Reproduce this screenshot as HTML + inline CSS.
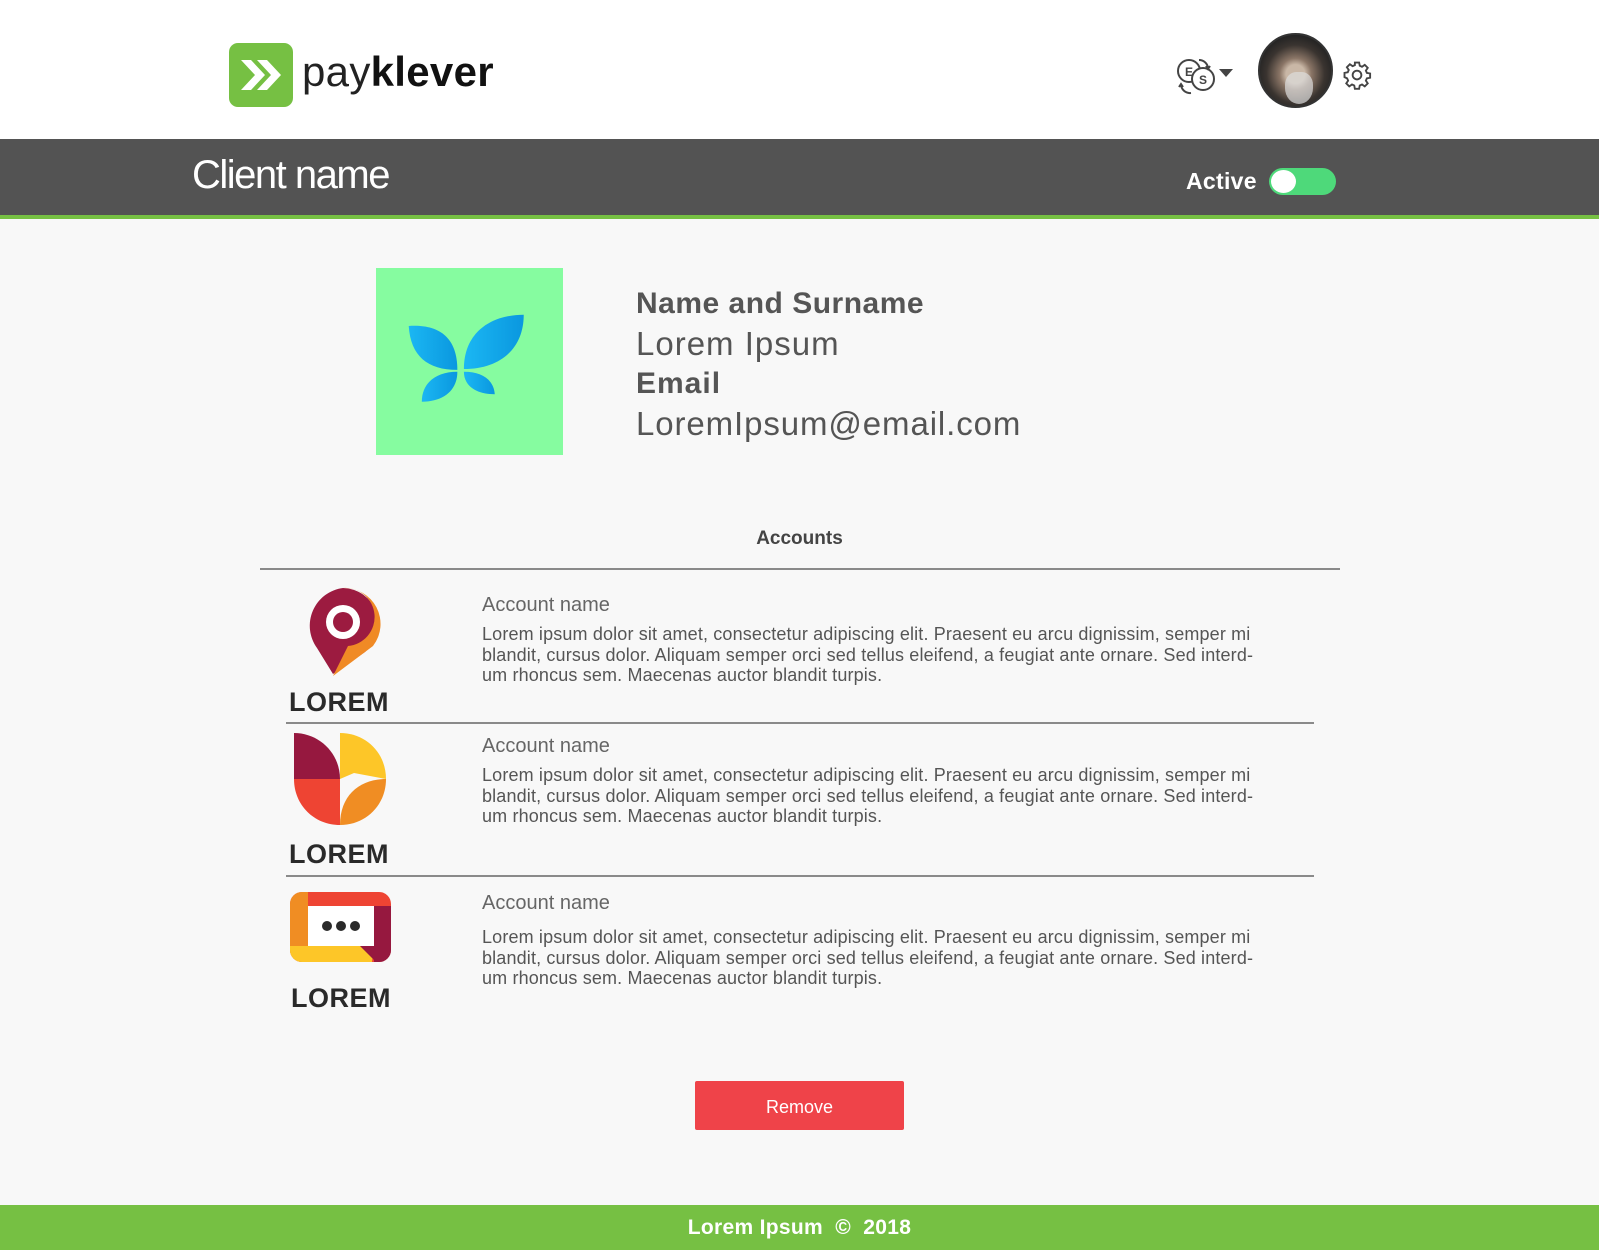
<!DOCTYPE html>
<html><head><meta charset="utf-8">
<style>
*{margin:0;padding:0;box-sizing:border-box}
body{width:1599px;height:1250px;position:relative;background:#f8f8f8;font-family:"Liberation Sans",sans-serif;overflow:hidden;color:#555}
.abs{position:absolute}
#top{left:0;top:0;width:1599px;height:139px;background:#fff}
#bar{left:0;top:139px;width:1599px;height:76px;background:#535353}
#gl{left:0;top:215px;width:1599px;height:4px;background:#76c043}
.p{font-size:18px;letter-spacing:0.15px;line-height:20.5px;color:#555;white-space:nowrap}
.an{font-size:20px;color:#666}
.lorem{font-weight:900;font-size:27px;color:#2a2a2a;letter-spacing:0.5px}
hr{position:absolute;border:0;height:1.5px;background:#8a8a8a}
</style></head><body>
<div class="abs" id="top"></div>
<div class="abs" style="left:229px;top:43px;width:64px;height:64px;background:#76c043;border-radius:9px">
<svg width="64" height="64" viewBox="0 0 64 64"><path d="M12 17h10l14 15-14 15H12l14-15z" fill="#fff"/><path d="M28 17h10l14 15-14 15H28l14-15z" fill="#fff"/></svg>
</div>
<div class="abs" style="left:302px;top:48px;font-size:42px;color:#111;letter-spacing:0.3px"><span style="font-weight:300;color:#222">pay</span><b>klever</b></div>

<svg class="abs" style="left:1173px;top:52px" width="66" height="46" viewBox="0 0 66 46">
<g fill="none" stroke="#444" stroke-width="2"><circle cx="16" cy="19" r="11"/><circle cx="30" cy="27" r="11" fill="#fff"/>
<path d="M26 8a9 9 0 0 1 9 8M33 14l2 3 2-3"/><path d="M8 32a9 9 0 0 0 10 9M10 35l-2-3-2 3"/></g>
<text x="12" y="24" font-size="12" font-weight="bold" fill="#444" font-family="Liberation Sans">E</text>
<text x="26" y="32" font-size="12" font-weight="bold" fill="#444" font-family="Liberation Sans">S</text>
<path d="M46 17h14l-7 8z" fill="#444"/></svg>
<div class="abs" style="left:1258px;top:33px;width:75px;height:75px;border-radius:50%;background:radial-gradient(circle at 50% 55%,#c9b7a6 0 18%,#8a7566 30%,#3a3430 55%,#222 75%);border:2px solid #333"></div>
<div class="abs" style="left:1285px;top:72px;width:28px;height:32px;border-radius:40% 40% 50% 50%;background:#ddd;opacity:.7"></div>
<svg class="abs" style="left:1342px;top:60px" width="30" height="30" viewBox="0 0 24 24"><path fill="none" stroke="#444" stroke-width="1.5" d="M12 8.5a3.5 3.5 0 1 0 0 7 3.5 3.5 0 0 0 0-7zM10.3 2h3.4l.5 2.6 1.8.8 2.2-1.5 2.4 2.4-1.5 2.2.8 1.8 2.6.5v3.4l-2.6.5-.8 1.8 1.5 2.2-2.4 2.4-2.2-1.5-1.8.8-.5 2.6h-3.4l-.5-2.6-1.8-.8-2.2 1.5-2.4-2.4 1.5-2.2-.8-1.8L2 13.7v-3.4l2.6-.5.8-1.8-1.5-2.2 2.4-2.4 2.2 1.5 1.8-.8z"/></svg>

<div class="abs" id="bar"></div><div class="abs" id="gl"></div>
<div class="abs" style="left:192px;top:153px;font-size:40px;font-weight:300;color:#fff;letter-spacing:-1.5px">Client name</div>
<div class="abs" style="left:1186px;top:168px;font-size:23px;font-weight:bold;color:#fff;letter-spacing:0.3px">Active</div>
<div class="abs" style="left:1269px;top:168px;width:67px;height:27px;border-radius:14px;background:#4ed97a"></div>
<div class="abs" style="left:1271px;top:170px;width:25px;height:23px;border-radius:50%;background:#fff"></div>

<div class="abs" style="left:376px;top:268px;width:187px;height:187px;background:#86fca0">
<svg width="187" height="187" viewBox="0 0 200 200"><defs><linearGradient id="g" x1="0" x2="1"><stop offset="0" stop-color="#1bb7f3"/><stop offset="1" stop-color="#0a97df"/></linearGradient></defs>
<g fill="url(#g)"><path d="M35 62c30 -2 52 10 52 47-32 0-50-15-52-47z"/><path d="M94 108c0-40 30-58 64-58 0 36-25 58-64 58z"/><path d="M49 143c0-20 15-32 38-32 0 20-15 32-38 32z"/><path d="M94 111c20 0 32 9 33 24-20 0-33-9-33-24z"/></g></svg>
</div>
<div class="abs" style="left:636px;top:284px;font-size:30px;line-height:40px;color:#555">
<div style="font-weight:bold;letter-spacing:0.5px">Name and Surname</div>
<div style="font-size:33px;letter-spacing:1px">Lorem Ipsum</div>
<div style="font-weight:bold;letter-spacing:1px">Email</div>
<div style="font-size:33px;letter-spacing:0.9px">LoremIpsum@email.com</div>
</div>

<div class="abs" style="left:0;width:1599px;top:528px;text-align:center;font-weight:bold;font-size:19px;color:#444">Accounts</div>
<hr style="left:260px;top:568px;width:1080px">
<hr style="left:286px;top:722px;width:1028px">
<hr style="left:286px;top:875px;width:1028px">

<svg class="abs" style="left:303px;top:586px" width="80" height="92" viewBox="0 0 80 92"><path d="M30 88 L14 62 A38 38 0 0 1 40 2 A36 36 0 0 1 62 66z" fill="#9c1b40"/><path d="M40 2 A36 36 0 0 1 70 60 L30 90 L45 60 A20 20 0 0 0 40 2z" fill="#f08a25"/><circle cx="40" cy="36" r="17" fill="#fff"/><circle cx="40" cy="36" r="10" fill="#9c1b40"/></svg>
<div class="abs lorem" style="left:289px;top:687px">LOREM</div>
<svg class="abs" style="left:294px;top:733px" width="94" height="94" viewBox="0 0 94 94"><path d="M0 0c25 0 46 20 46 46H0z" fill="#96183f"/><path d="M0 46h46v46C20 92 0 72 0 46z" fill="#ee4433"/><path d="M46 0c26 0 46 20 46 46-20 0-36 0-46 0 0-10 0-30 0-46z" fill="#fdc628"/><path d="M46 92c0-30 20-46 46-46 0 26-20 46-46 46z" fill="#f08d23"/><path d="M92 46L60 40 46 46z" fill="#f8f8f8"/></svg>
<div class="abs lorem" style="left:289px;top:839px">LOREM</div>
<svg class="abs" style="left:290px;top:892px" width="101" height="70" viewBox="0 0 101 70"><rect width="101" height="70" rx="12" fill="#ee4433"/><path d="M0 12a12 12 0 0 1 12-12h6v70H12A12 12 0 0 1 0 58z" fill="#f08d23"/><path d="M0 54h84l-2 16H12A12 12 0 0 1 0 58z" fill="#fdc628"/><path d="M84 14h17v44a12 12 0 0 1-12 12h-5z" fill="#96183f"/><path d="M18 14h66v40H18z" fill="#fff"/><path d="M70 54l14 14V54z" fill="#96183f"/><circle cx="37" cy="34" r="5" fill="#2a2a2a"/><circle cx="51" cy="34" r="5" fill="#2a2a2a"/><circle cx="65" cy="34" r="5" fill="#2a2a2a"/></svg>
<div class="abs lorem" style="left:291px;top:983px">LOREM</div>

<div class="abs an" style="left:482px;top:594px">Account name</div>
<div class="abs p" style="left:482px;top:624px">Lorem ipsum dolor sit amet, consectetur adipiscing elit. Praesent eu arcu dignissim, semper mi<br>blandit, cursus dolor. Aliquam semper orci sed tellus eleifend, a feugiat ante ornare. Sed interd-<br>um rhoncus sem. Maecenas auctor blandit turpis.</div>
<div class="abs an" style="left:482px;top:735px">Account name</div>
<div class="abs p" style="left:482px;top:765px">Lorem ipsum dolor sit amet, consectetur adipiscing elit. Praesent eu arcu dignissim, semper mi<br>blandit, cursus dolor. Aliquam semper orci sed tellus eleifend, a feugiat ante ornare. Sed interd-<br>um rhoncus sem. Maecenas auctor blandit turpis.</div>
<div class="abs an" style="left:482px;top:892px">Account name</div>
<div class="abs p" style="left:482px;top:927px">Lorem ipsum dolor sit amet, consectetur adipiscing elit. Praesent eu arcu dignissim, semper mi<br>blandit, cursus dolor. Aliquam semper orci sed tellus eleifend, a feugiat ante ornare. Sed interd-<br>um rhoncus sem. Maecenas auctor blandit turpis.</div>

<div class="abs" style="left:695px;top:1081px;width:209px;height:49px;background:#ef4349;border-radius:2px;color:#fff;font-size:18px;text-align:center;line-height:53px">Remove</div>
<div class="abs" style="left:0;top:1205px;width:1599px;height:45px;background:#76c043;color:#fff;font-weight:bold;font-size:21px;text-align:center;line-height:45px;letter-spacing:0.3px">Lorem Ipsum &nbsp;© &nbsp;2018</div>
</body></html>
